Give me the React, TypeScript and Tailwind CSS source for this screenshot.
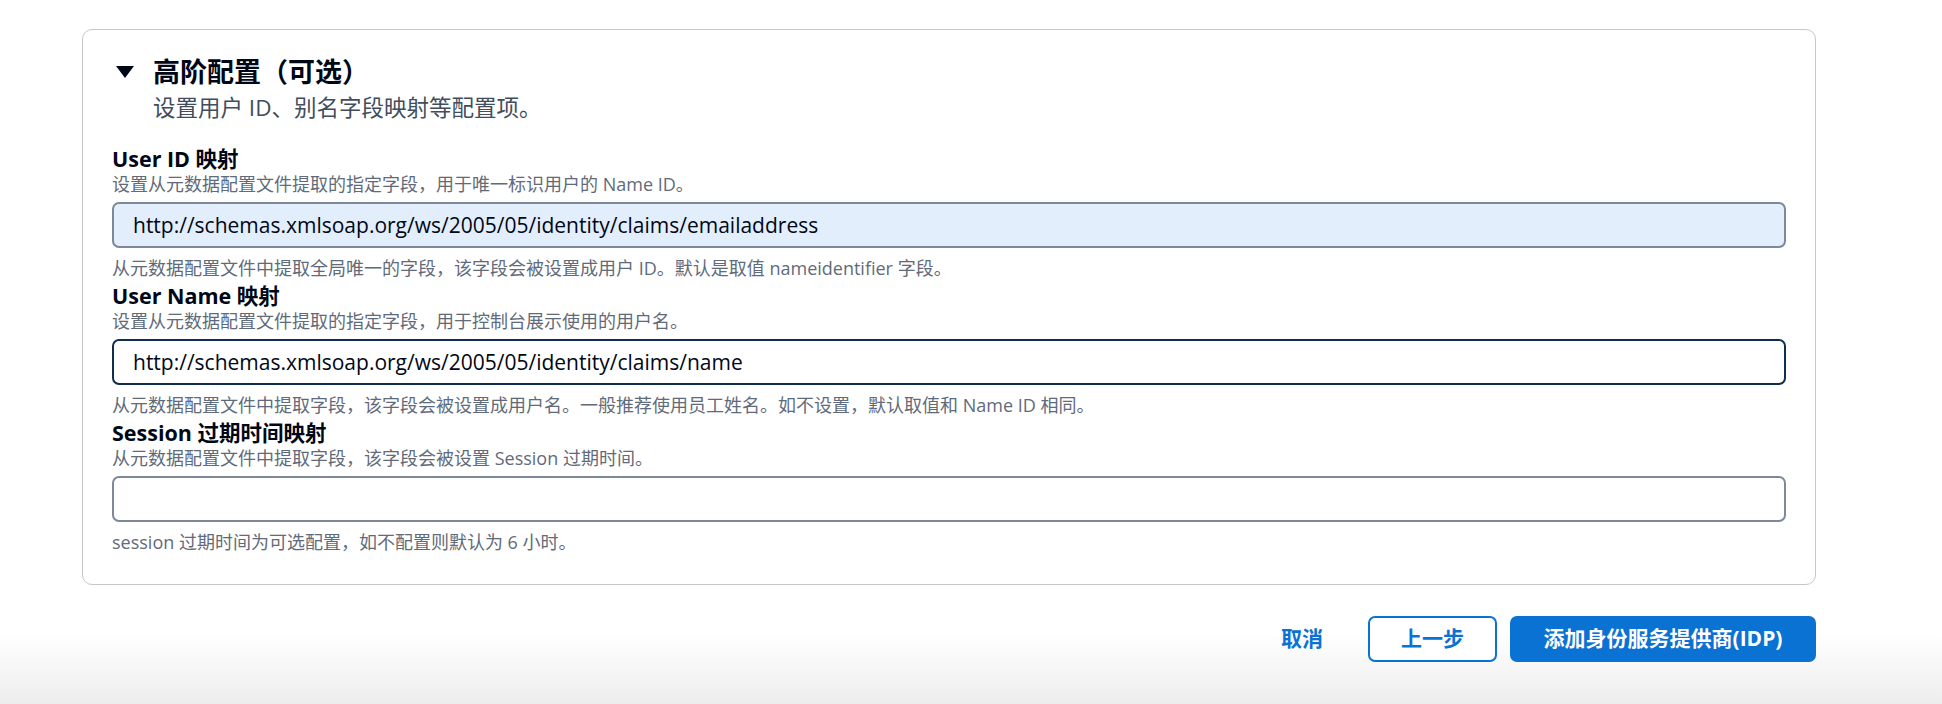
const font = { fontFamily: '"Open Sans", "Noto Sans CJK SC", sans-serif' };

type Field = {
  label: string;
  desc: string;
  value: string;
  help: string;
  variant: "autofill" | "focus" | "empty";
};

const fields: Field[] = [
  {
    label: "User ID 映射",
    desc: "设置从元数据配置文件提取的指定字段，用于唯一标识用户的 Name ID。",
    value: "http://schemas.xmlsoap.org/ws/2005/05/identity/claims/emailaddress",
    help: "从元数据配置文件中提取全局唯一的字段，该字段会被设置成用户 ID。默认是取值 nameidentifier 字段。",
    variant: "autofill",
  },
  {
    label: "User Name 映射",
    desc: "设置从元数据配置文件提取的指定字段，用于控制台展示使用的用户名。",
    value: "http://schemas.xmlsoap.org/ws/2005/05/identity/claims/name",
    help: "从元数据配置文件中提取字段，该字段会被设置成用户名。一般推荐使用员工姓名。如不设置，默认取值和 Name ID 相同。",
    variant: "focus",
  },
  {
    label: "Session 过期时间映射",
    desc: "从元数据配置文件中提取字段，该字段会被设置 Session 过期时间。",
    value: "",
    help: "session 过期时间为可选配置，如不配置则默认为 6 小时。",
    variant: "empty",
  },
];

function FormField({ f, first }: { f: Field; first: boolean }) {
  const inputCls =
    f.variant === "autofill"
      ? "border-[#7d8998] bg-[#e3eefc]"
      : f.variant === "focus"
      ? "border-[#0f2d4f] bg-white"
      : "border-[#7d8998] bg-white";

  return (
    <div className={first ? "mt-[26px]" : "mt-[3px]"}>
      <div className="text-[21.5px] font-bold leading-[26px] text-[#000716]">{f.label}</div>
      <div className="text-[18px] leading-[24px] text-[#5f6b7a]">{f.desc}</div>
      <input
        readOnly
        value={f.value}
        style={font}
        className={`mt-[6px] block h-[46px] w-full rounded-[7px] border-2 px-[19px] text-[21px] text-[#000716] outline-none ${inputCls}`}
      />
      <div className="mt-[8px] text-[18px] leading-[24px] text-[#5f6b7a]">{f.help}</div>
    </div>
  );
}

export default function App() {
  return (
    <div
      style={font}
      className="h-[704px] w-full overflow-hidden bg-linear-to-b from-white from-[90%] to-[#ededed] pt-[29px]"
    >
      <div className="ml-[82px] w-[1734px]">
        {/* CARD */}
        <section className="rounded-[10px] border border-[#c6c6cd] bg-white px-[29px] pt-[24px] pb-[30px]">
          <div className="flex h-[36px] items-center">
            <svg width="18" height="12" viewBox="0 0 18 12" className="ml-[4px] mr-[19px]">
              <polygon points="0,0 18,0 9,12" fill="#000716" />
            </svg>
            <h2 className="text-[27px] font-bold leading-[36px] text-[#000716]">高阶配置（可选）</h2>
          </div>
          <p className="mt-[6px] pl-[41px] text-[22.5px] leading-[24px] text-[#414d5c]">
            设置用户 ID、别名字段映射等配置项。
          </p>

          {fields.map((f, i) => (
            <FormField key={f.label} f={f} first={i === 0} />
          ))}
        </section>

        {/* ACTIONS */}
        <div className="mt-[31px] flex items-center justify-end">
          <button className="mr-[25px] h-[46px] px-[20px] text-[21px] font-bold text-[#0972d3]">取消</button>
          <button className="h-[46px] w-[129px] rounded-[7px] border-2 border-[#0972d3] bg-white text-[21px] font-bold text-[#0972d3]">
            上一步
          </button>
          <button className="ml-[13px] h-[46px] w-[306px] rounded-[7px] bg-[#0972d3] text-[21px] font-bold text-white">
            添加身份服务提供商(IDP)
          </button>
        </div>
      </div>
    </div>
  );
}
